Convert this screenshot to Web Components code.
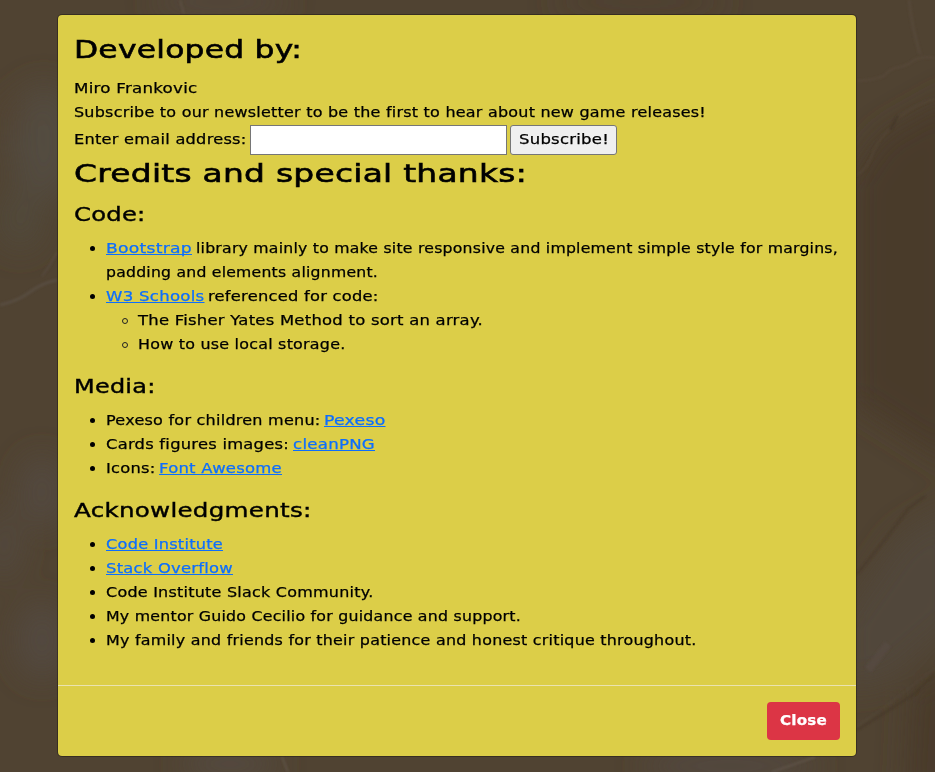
<!DOCTYPE html>
<html lang="en">
<head>
<meta charset="utf-8">
<title>Credits</title>
<style>
html,body{margin:0;height:100%;background:#504332}
body{overflow:hidden;font:13.4px/24px "DejaVu Sans",sans-serif;color:#000}
</style>
</head>
<body>
<stone-backdrop>
  <credits-dialog>
    <section-title level="2"><fit-text w="228">Developed by:</fit-text></section-title>
    <text-line><fit-text w="123.5">Miro Frankovic</fit-text></text-line>
    <text-line><fit-text w="632">Subscribe to our newsletter to be the first to hear about new game releases!</fit-text></text-line>
    <newsletter-form></newsletter-form>
    <section-title level="2"><fit-text w="453">Credits and special thanks:</fit-text></section-title>
    <section-title><fit-text w="71.5">Code:</fit-text></section-title>
    <bullet-list>
      <bullet-item><fit-text link w="86">Bootstrap</fit-text><fit-text gap w="642">library mainly to make site responsive and implement simple style for margins,</fit-text><br><fit-text w="272">padding and elements alignment.</fit-text></bullet-item>
      <bullet-item><fit-text link w="98.5">W3 Schools</fit-text><fit-text gap w="170.5">referenced for code:</fit-text></bullet-item>
      <bullet-list nested>
        <bullet-item hollow><fit-text w="345">The Fisher Yates Method to sort an array.</fit-text></bullet-item>
        <bullet-item hollow><fit-text w="207.5">How to use local storage.</fit-text></bullet-item>
      </bullet-list>
    </bullet-list>
    <section-title><fit-text w="81.5">Media:</fit-text></section-title>
    <bullet-list>
      <bullet-item><fit-text w="214.5">Pexeso for children menu:</fit-text><fit-text gap link w="61.5">Pexeso</fit-text></bullet-item>
      <bullet-item><fit-text w="183">Cards figures images:</fit-text><fit-text gap link w="82">cleanPNG</fit-text></bullet-item>
      <bullet-item><fit-text w="49.5">Icons:</fit-text><fit-text gap link w="123">Font Awesome</fit-text></bullet-item>
    </bullet-list>
    <section-title><fit-text w="237.5">Acknowledgments:</fit-text></section-title>
    <bullet-list>
      <bullet-item><fit-text link w="117">Code Institute</fit-text></bullet-item>
      <bullet-item><fit-text link w="127">Stack Overflow</fit-text></bullet-item>
      <bullet-item><fit-text w="267.5">Code Institute Slack Community.</fit-text></bullet-item>
      <bullet-item><fit-text w="415">My mentor Guido Cecilio for guidance and support.</fit-text></bullet-item>
      <bullet-item><fit-text w="590.5">My family and friends for their patience and honest critique throughout.</fit-text></bullet-item>
    </bullet-list>
    <close-button slot="footer"><fit-text w="47">Close</fit-text></close-button>
  </credits-dialog>
</stone-backdrop>
<script>
const define = (name, html, init) => customElements.define(name, class extends HTMLElement {
  constructor() { super(); this.attachShadow({mode: 'open'}).innerHTML = html; }
  connectedCallback() { if (init) init(this); }
});

define('stone-backdrop', `<style>
:host{display:flex;justify-content:center;align-items:flex-start;box-sizing:border-box;height:772px;width:935px;padding:14px 21px 0 0;position:relative;overflow:hidden;background:#504332}
svg{position:absolute;inset:0;z-index:0}
slot{display:contents}
::slotted(*){z-index:1}
</style>
<svg width="935" height="772" viewBox="0 0 935 772" aria-hidden="true">
<defs><filter id="b" x="-80%" y="-80%" width="260%" height="260%"><feGaussianBlur stdDeviation="15"/></filter><filter id="s" x="-20%" y="-20%" width="140%" height="140%"><feGaussianBlur stdDeviation="1.2"/></filter></defs>
<g filter="url(#b)">
<path d="M850 180L880 135L960 90V470L850 400Z" fill="#4a3b2b"/>
<path d="M840 620L900 535L960 500V620L890 680L840 690Z" fill="#51473a"/>
<path d="M910 690L960 660V800H905Z" fill="#483a2b"/>
<ellipse cx="44" cy="142" rx="34" ry="58" fill="#534b40"/>
<ellipse cx="20" cy="220" rx="22" ry="30" fill="#51483a"/>
<ellipse cx="42" cy="492" rx="22" ry="36" fill="#534a3f"/>
<ellipse cx="4" cy="545" rx="14" ry="34" fill="#534a3f"/>
<ellipse cx="42" cy="640" rx="26" ry="38" fill="#53493f"/>
<ellipse cx="12" cy="115" rx="14" ry="12" fill="#524330"/>
<ellipse cx="230" cy="764" rx="50" ry="14" fill="#554b42"/>
<ellipse cx="730" cy="766" rx="90" ry="14" fill="#524942"/>
<ellipse cx="220" cy="2" rx="70" ry="10" fill="#54493f"/>
<ellipse cx="640" cy="2" rx="90" ry="8" fill="#4d3e2e"/>
</g>
<g filter="url(#s)" fill="none" opacity=".75">
<path d="M0 305Q18 301 30 292T57 280" stroke="#5a5045" stroke-width="3"/>
<path d="M57 252Q50 266 42 276" stroke="#584c42" stroke-width="2"/>
<path d="M857 81Q874 80 884 76Q890 68 900 67Q909 65 914 60Q922 56 935 58" stroke="#584a3b" stroke-width="2"/>
<path d="M909 0Q912 28 920 54" stroke="#57493a" stroke-width="3"/>
<path d="M857 175Q869 168 874 150Q880 138 890 129Q903 108 935 99" stroke="#544636" stroke-width="2"/>
<path d="M890 130L898 116" stroke="#403427" stroke-width="2"/>
<path d="M857 574L884 541L908 509L925 496" stroke="#463929" stroke-width="1.8"/>
<path d="M857 730L886 712L914 694L935 674" stroke="#443728" stroke-width="1.6"/>
<path d="M857 726L890 703L935 668" stroke="#574c40" stroke-width="1"/>
<path d="M868 670L888 644" stroke="#5a4c46" stroke-width="8" opacity=".7"/>
<path d="M282 757L288 772M772 772L815 757" stroke="#62564b" stroke-width="2"/>
<path d="M180 0L184 14" stroke="#5d5145" stroke-width="2"/>
</g></svg><slot></slot>`);

define('credits-dialog', `<style>
:host{display:flex;flex-direction:column;box-sizing:border-box;width:800px;height:743px;background:#dcce48;background-clip:padding-box;border:1px solid rgba(0,0,0,.3);border-radius:5px;-webkit-text-stroke-width:.25px}
main{padding:16px;height:638px}
footer{display:flex;justify-content:flex-end;padding:16px;border-top:1px solid #eae3b0}
</style><main><slot></slot></main><footer><slot name="footer"></slot></footer>`);

define('section-title', `<style>
:host{display:block;height:28px;line-height:29px;font-size:19.4px;margin-bottom:8px;-webkit-text-stroke-width:.4px}
:host([level="2"]){height:37px;line-height:36px;font-size:25.6px;-webkit-text-stroke-width:.6px}
</style><slot></slot>`);

define('text-line', `<style>:host{display:block;height:24px;line-height:26px}</style><slot></slot>`);

define('newsletter-form', `<style>
:host{display:flex;height:30px;margin-top:1px;align-items:stretch}
label{line-height:30px;width:176px}
input{box-sizing:border-box;width:257px;height:30px;border:1px solid #767676;background:#fff;margin:0 3px 0 0;padding:1px 2px;font:inherit;border-radius:0}
button{box-sizing:border-box;width:107px;height:30px;border:1px solid #767676;border-radius:3px;background:#efefef;margin:0;padding:0 0 1px;font:inherit;color:#000}
</style><label for="email"><fit-text w="172.5">Enter email address:</fit-text></label><input id="email" type="email"><button><fit-text w="90">Subscribe!</fit-text></button>`);

define('bullet-list', `<style>:host{display:block;padding-left:32px;margin-bottom:16px}:host([nested]){margin-bottom:0}</style><slot></slot>`);

define('bullet-item', `<style>
:host{display:block;position:relative;white-space:nowrap}
i{position:absolute;left:-16.5px;top:9.5px;width:5.5px;height:5.5px;border-radius:50%;background:#000;box-sizing:border-box}
:host([hollow]) i{width:6px;height:6px;background:none;border:1px solid #222}
div{position:relative;top:1px}
</style><i></i><div><slot></slot></div>`);

define('close-button', `<style>
:host{display:block;box-sizing:border-box;width:73px;height:38px;line-height:38px;text-align:center;border-radius:4px;background:#dc3545;color:#fff;font-weight:bold}
</style><slot></slot>`);

/* A run of text widened to fill the width given by its w attribute. */
define('fit-text', `<style>
:host{display:inline-block;white-space:pre;text-align:left;height:1em;line-height:1em}
:host([gap]){margin-left:3.5px}
:host([link]){color:#0d6efd}
span{display:inline-block;white-space:pre;transform-origin:0 50%}
:host([link]) span{text-decoration:underline;text-decoration-thickness:1px;text-underline-offset:1px;text-decoration-skip-ink:none}
</style><span><slot></slot></span>`, el => {
  const target = +el.getAttribute('w'), span = el.shadowRoot.querySelector('span');
  span.style.letterSpacing = '.2px';
  const natural = span.getBoundingClientRect().width;
  span.style.transform = `scaleX(${target / natural})`;
  el.style.width = target + 'px';
});
</script>
</body>
</html>
